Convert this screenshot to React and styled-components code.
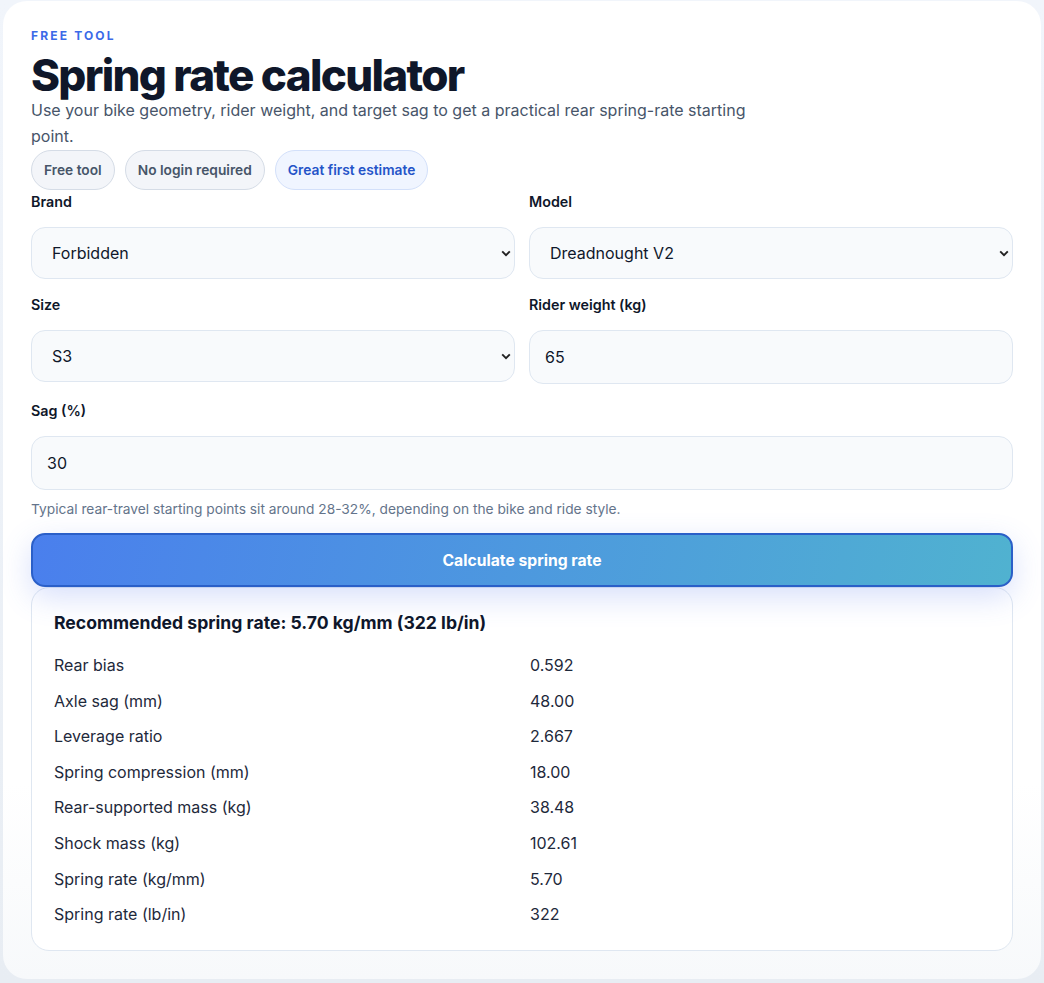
import React from 'react';
import styled, { createGlobalStyle } from 'styled-components';

const chevron =
  "data:image/svg+xml,%3Csvg xmlns='http://www.w3.org/2000/svg' width='10' height='7' viewBox='0 0 10 7'%3E%3Cpath d='M1.2 1.4 5 5.2l3.8-3.8' fill='none' stroke='%23222' stroke-width='1.9'/%3E%3C/svg%3E";

const GlobalStyle = createGlobalStyle`
  * {
    box-sizing: border-box;
  }
  body {
    margin: 0;
    background: linear-gradient(180deg, #f1f5fb 0%, #e8edf3 100%);
    font-family: Inter, "Liberation Sans", sans-serif;
    color: #0f172a;
  }
`;

const Page = styled.div`
  padding: 1px 3px 4px;
`;

const Card = styled.main`
  height: 978px;
  padding: 28px 28px;
  background: linear-gradient(180deg, #ffffff 0%, #ffffff 80%, #f7f9fb 100%);
  border-radius: 24px;
`;

const Eyebrow = styled.div`
  font-size: 12px;
  line-height: 13px;
  font-weight: 700;
  letter-spacing: 0.18em;
  color: #3b6ae8;
  margin-bottom: 11px;
`;

const Title = styled.h1`
  margin: 0;
  font-size: 44px;
  line-height: 44px;
  font-weight: 800;
  letter-spacing: -0.038em;
  color: #0f172a;
`;

const Lead = styled.p`
  margin: 0 0 1px;
  max-width: 720px;
  font-size: 16px;
  line-height: 26px;
  color: #475569;
`;

const Chips = styled.div`
  display: flex;
  gap: 10px;
  margin-bottom: 2px;
`;

const Chip = styled.span`
  height: 40px;
  padding: 0 12px;
  display: inline-flex;
  align-items: center;
  font-size: 13.75px;
  font-weight: 600;
  border-radius: 20px;
  border: 1px solid ${props => (props.$accent ? '#d3e0fa' : '#d5dce6')};
  background: ${props => (props.$accent ? '#f0f5ff' : '#f3f5f9')};
  color: ${props => (props.$accent ? '#2454c8' : '#475569')};
`;

const Grid = styled.div`
  display: grid;
  grid-template-columns: 484px 484px;
  column-gap: 14px;
`;

const Field = styled.label`
  display: block;
  margin-bottom: ${props => props.$mb || '0'};
`;

const LabelText = styled.div`
  font-size: 14.3px;
  line-height: 20px;
  font-weight: 600;
  color: #0f172a;
  margin-bottom: 15px;
`;

const Select = styled.select`
  display: block;
  width: 100%;
  height: 52px;
  padding: 0 8px 0 20px;
  appearance: none;
  font-family: inherit;
  font-size: 16px;
  color: #0f172a;
  background: #f8fafc url("${chevron}") no-repeat right 3px center;
  border: 1px solid #dfe7f1;
  border-radius: 14px;
  outline: none;
`;

const Input = styled.input`
  display: block;
  width: 100%;
  height: 54px;
  padding: 0 15px;
  font-family: inherit;
  font-size: 16px;
  color: #0f172a;
  background: #f8fafc;
  border: 1px solid #dfe7f1;
  border-radius: 14px;
  outline: none;
`;

const Hint = styled.div`
  margin-top: 10px;
  font-size: 13.75px;
  line-height: 18px;
  color: #64748b;
`;

const CalcButton = styled.button`
  display: block;
  width: 100%;
  height: 54px;
  margin-top: 15px;
  font-family: inherit;
  font-size: 15.7px;
  font-weight: 700;
  color: #ffffff;
  background: linear-gradient(100deg, #4a7fed 0%, #50b2d0 100%);
  border: 2px solid #2a5fc8;
  border-radius: 14px;
  box-shadow: 0 10px 30px rgba(74, 110, 235, 0.22);
  position: relative;
  z-index: 1;
`;

const Result = styled.section`
  height: 364px;
  padding: 22px 22px;
  background: #ffffff;
  border: 1px solid #dfe7f1;
  border-radius: 18px;
`;

const ResultTitle = styled.div`
  font-size: 17.6px;
  line-height: 26px;
  font-weight: 700;
  color: #0f172a;
  margin-bottom: 11.3px;
`;

const Row = styled.div`
  display: grid;
  grid-template-columns: 476px 1fr;
  height: 35.6px;
  align-items: center;
  font-size: 16px;
  color: #1e293b;
`;

const rows = [
  ['Rear bias', '0.592'],
  ['Axle sag (mm)', '48.00'],
  ['Leverage ratio', '2.667'],
  ['Spring compression (mm)', '18.00'],
  ['Rear-supported mass (kg)', '38.48'],
  ['Shock mass (kg)', '102.61'],
  ['Spring rate (kg/mm)', '5.70'],
  ['Spring rate (lb/in)', '322'],
];

const App = () => {
  return (
    <Page>
      <GlobalStyle />
      <Card>
        <Eyebrow>FREE TOOL</Eyebrow>
        <Title>Spring rate calculator</Title>
        <Lead>
          Use your bike geometry, rider weight, and target sag to get a practical rear spring-rate starting point.
        </Lead>
        <Chips>
          <Chip>Free tool</Chip>
          <Chip>No login required</Chip>
          <Chip $accent>Great first estimate</Chip>
        </Chips>
        <Grid>
          <Field $mb="16px">
            <LabelText>Brand</LabelText>
            <Select defaultValue="Forbidden">
              <option>Forbidden</option>
            </Select>
          </Field>
          <Field $mb="16px">
            <LabelText>Model</LabelText>
            <Select defaultValue="Dreadnought V2">
              <option>Dreadnought V2</option>
            </Select>
          </Field>
          <Field $mb="17px">
            <LabelText>Size</LabelText>
            <Select defaultValue="S3">
              <option>S3</option>
            </Select>
          </Field>
          <Field $mb="17px">
            <LabelText>Rider weight (kg)</LabelText>
            <Input defaultValue="65" />
          </Field>
        </Grid>
        <Field>
          <LabelText>Sag (%)</LabelText>
          <Input defaultValue="30" />
        </Field>
        <Hint>Typical rear-travel starting points sit around 28-32%, depending on the bike and ride style.</Hint>
        <CalcButton>Calculate spring rate</CalcButton>
        <Result>
          <ResultTitle>Recommended spring rate: 5.70 kg/mm (322 lb/in)</ResultTitle>
          {rows.map(([name, value]) => (
            <Row key={name}>
              <span>{name}</span>
              <span>{value}</span>
            </Row>
          ))}
        </Result>
      </Card>
    </Page>
  );
};

export default App;
